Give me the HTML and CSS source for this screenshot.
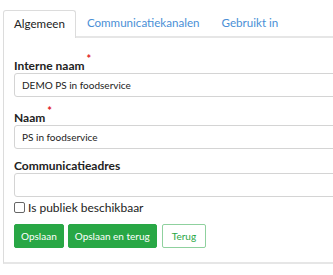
FILE: index.html
```html
<!DOCTYPE html>
<html>
<head>
<meta charset="utf-8">
<link rel="stylesheet" href="styles.css">
</head>
<body>
<div class="wrap">
  <ul class="tabs">
    <li class="tab active">Algemeen</li>
    <li class="tab">Communicatiekanalen</li>
    <li class="tab">Gebruikt in</li>
  </ul>
  <div class="panel">
    <div class="group">
      <label class="label required">Interne naam<span class="star">*</span></label>
      <div class="input">DEMO PS in foodservice</div>
    </div>
    <div class="group">
      <label class="label required">Naam<span class="star">*</span></label>
      <div class="input">PS in foodservice</div>
    </div>
    <div class="group">
      <label class="label">Communicatieadres</label>
      <div class="input"></div>
    </div>
    <div class="check-row">
      <span class="box"></span>
      <span class="check-text">Is publiek beschikbaar</span>
    </div>
    <div class="buttons">
      <button class="btn primary">Opslaan</button>
      <button class="btn primary">Opslaan en terug</button>
      <button class="btn outline">Terug</button>
    </div>
  </div>
</div>
</body>
</html>
```
FILE: styles.css
```css
html, body {
  margin: 0;
  padding: 0;
  background: #fff;
}
body {
  font-family: Lato, "Liberation Sans", sans-serif;
  color: #222;
  overflow: hidden;
}
.wrap {
  padding: 10px 0 0 3px;
  width: 360px;
}
.tabs {
  list-style: none;
  margin: 0;
  padding: 0;
  display: flex;
  border-bottom: 2px solid #e6e6e6;
  height: 26px;
}
.tab {
  font-size: 11.6px;
  color: #4a8fd6;
  padding: 0 10px;
  line-height: 24px;
  height: 26px;
  box-sizing: border-box;
  border: 1px solid transparent;
  white-space: nowrap;
}
.tab.active {
  color: #222;
  background: #fff;
  border-color: #dcdcdc;
  border-bottom: none;
  border-radius: 3px 3px 0 0;
  height: 28px;
  padding-top: 1px;
}
.panel {
  border-left: 1px solid #dcdcdc;
  border-bottom: 2px solid #e6e6e6;
  padding: 17px 10px 14px 10px;
}
.group {
  margin-bottom: 10px;
}
.label {
  display: block;
  font-size: 12px;
  font-weight: bold;
  line-height: 14px;
  color: #222;
}
.label.required {
  padding-top: 4px;
}
.star {
  color: #e0161b;
  font-size: 11px;
  font-weight: bold;
  position: relative;
  top: -7px;
  left: 2px;
}
.input {
  height: 24px;
  box-sizing: border-box;
  border: 1px solid #d4d4d4;
  border-radius: 3px;
  font-size: 10px;
  line-height: 22px;
  padding: 0 7px;
  color: #222;
}
.check-row {
  display: flex;
  align-items: center;
  height: 14px;
  margin-top: -7px;
  font-size: 12px;
}
.box {
  width: 9px;
  height: 9px;
  border: 1px solid #666;
  border-radius: 2px;
  margin-right: 3px;
}
.buttons {
  display: flex;
  gap: 4px;
  margin-top: 10px;
}
.btn {
  font-family: Lato, "Liberation Sans", sans-serif;
  font-size: 10px;
  height: 24px;
  margin: 0;
  padding: 0 6px;
  border-radius: 2px;
  border: 1px solid #28a745;
  cursor: pointer;
}
.primary {
  background: #28a745;
  color: #fff;
}
.outline {
  background: #fff;
  color: #28a745;
  border-color: #8fd19e;
  margin-left: 1px;
  padding: 0 9px;
}
```
